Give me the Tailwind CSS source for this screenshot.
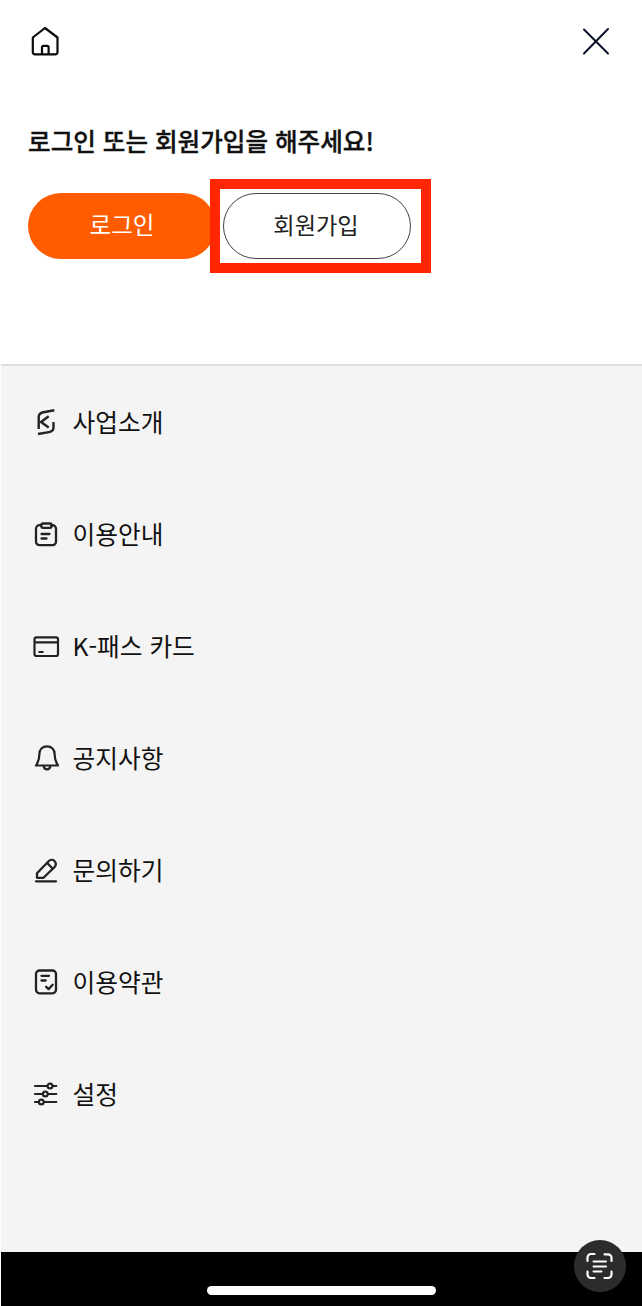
<!DOCTYPE html>
<html lang="ko">
<head>
  <meta charset="UTF-8">
  <meta name="viewport" content="width=device-width, initial-scale=1.0">
  <title>K-패스</title>
  <script src="https://cdn.jsdelivr.net/npm/@tailwindcss/browser@4"></script>
</head>
<body class="bg-white font-['Noto_Sans_CJK_KR','Noto_Sans',sans-serif] text-[#111]">
  <div class="relative flex flex-col h-[1306px] pl-px overflow-hidden">

    <!-- 상단 영역 -->
    <header class="h-[366px] shrink-0 border-b-2 border-[#dedede]">
      <div class="flex justify-between items-center h-[82px] pl-[29px] pr-[31px]">
        <button aria-label="홈">
          <svg class="w-[30px] h-[30px]" viewBox="0 0 30 30" fill="none" stroke="#0a0a0a" stroke-width="2.200" stroke-linecap="round" stroke-linejoin="round">
            <path d="M2.800 11.500 15 2 27.500 11.500v14.700a2.200 2.200 0 0 1-2.200 2.200H5a2.200 2.200 0 0 1-2.200-2.200z"/>
            <path d="M12 28v-6.700a1.500 1.500 0 0 1 1.500-1.500h3.600a1.500 1.500 0 0 1 1.500 1.500V28"/>
          </svg>
        </button>
        <button aria-label="닫기">
          <svg class="w-[30px] h-[30px]" viewBox="0 0 30 30" fill="none" stroke="#0b1228" stroke-width="2" stroke-linecap="round">
            <path d="M3 3.500 27 27.500M27 3 3 27.500"/>
          </svg>
        </button>
      </div>

      <h1 class="mt-10 mb-[21px] ml-[27px] h-9 leading-9 text-[24.600px] font-medium [-webkit-text-stroke:0.35px_#111] whitespace-nowrap">로그인 또는 회원가입을 해주세요!</h1>

      <div class="flex items-center ml-[27px]">
        <button class="w-[188px] h-[66px] pb-[3px] rounded-full bg-[#ff5c00] text-white text-[23.500px]">로그인</button>
        <!-- 회원가입 강조 -->
        <div class="relative -ml-[6px] w-[221px] h-[94px] border-10 border-[#ff2600] bg-white pl-[3px] flex items-center">
          <button class="w-[188px] h-[66px] pb-[3px] pr-[2px] rounded-full border border-[#444] text-[#222] text-[23.200px]">회원가입</button>
        </div>
      </div>
    </header>

    <!-- 메뉴 -->
    <nav class="grow bg-[#f4f4f4] pl-[31px] text-[24.700px]">
      <a class="flex items-center gap-[12.500px] h-28">
        <svg class="w-7 h-7" viewBox="0 0 28 28" fill="none" stroke="#222" stroke-width="2.400">
          <path d="M22.300 2.300 11.500 4.200Q6.700 5 6.700 9v12M16.700 8.300 9 14l7.700 5.500M21.500 14v5.500q0 3.800-4.500 4.600L6 26"/>
        </svg>
        <span>사업소개</span>
      </a>
      <a class="flex items-center gap-[12.500px] h-28">
        <svg class="w-7 h-7" viewBox="0 0 28 28" fill="none" stroke="#222" stroke-width="2.300" stroke-linecap="round">
          <path d="M9 5.200H7.500a3.500 3.500 0 0 0-3.500 3.500v13A3.500 3.500 0 0 0 7.500 25.200h13a3.500 3.500 0 0 0 3.500-3.500v-13A3.500 3.500 0 0 0 20.500 5.200H19"/>
          <rect x="9.300" y="3.500" width="10.400" height="4.300" rx="1.800"/>
          <path d="M9.500 14h8M9.500 18.500h5"/>
        </svg>
        <span>이용안내</span>
      </a>
      <a class="flex items-center gap-[12.500px] h-28">
        <svg class="w-7 h-7" viewBox="0 0 28 28" fill="none" stroke="#222" stroke-width="2.200">
          <rect x="2.500" y="5.300" width="23.500" height="18.700" rx="2"/>
          <path d="M2 10.300h24M6.500 20h5"/>
        </svg>
        <span>K-패스 카드</span>
      </a>
      <a class="flex items-center gap-[12.500px] h-28">
        <svg class="w-7 h-7" viewBox="0 0 28 28" fill="none" stroke="#222" stroke-width="2.200" stroke-linejoin="round">
          <path d="M15 2.300c-4.600 0-7.600 3.200-7.600 7.600 0 5.200-1.200 8.500-3.400 11.600h22c-2.200-3.100-3.400-6.400-3.400-11.600 0-4.400-3-7.600-7.600-7.600z"/>
          <path d="M11.500 22c.4 2 1.700 3.300 3.500 3.300s3.100-1.300 3.500-3.300"/>
        </svg>
        <span>공지사항</span>
      </a>
      <a class="flex items-center gap-[12.500px] h-28">
        <svg class="w-7 h-7" viewBox="0 0 28 28" fill="none" stroke="#222" stroke-width="2.300" stroke-linecap="round" stroke-linejoin="round">
          <path d="M5 21.800V17.200L16.600 5.200c1.700-1.800 4.200-1.800 5.900-.2s1.800 4.200.1 6L11.500 21.800z"/>
          <path d="m15.200 7 5.300 5.500M4 25.300h20"/>
        </svg>
        <span>문의하기</span>
      </a>
      <a class="flex items-center gap-[12.500px] h-28">
        <svg class="w-7 h-7" viewBox="0 0 28 28" fill="none" stroke="#222" stroke-width="2.300" stroke-linecap="round" stroke-linejoin="round">
          <rect x="4" y="2.500" width="20" height="22.800" rx="3.500"/>
          <path d="M9.500 7.800h7.500M9.500 12.500h4.200M14.200 18.800l2.400 2.300 4-4.300"/>
        </svg>
        <span>이용약관</span>
      </a>
      <a class="flex items-center gap-[12.500px] h-28">
        <svg class="w-7 h-7" viewBox="0 0 28 28" fill="none" stroke="#222" stroke-width="2.200" stroke-linecap="round">
          <path d="M3 6h12M21 6h3.300M3 14h7.300M16.300 14h8M3 22h3.300M12.300 22h12"/>
          <circle cx="18" cy="6" r="2.400"/>
          <circle cx="13.300" cy="14" r="2.400"/>
          <circle cx="9.300" cy="22" r="2.400"/>
        </svg>
        <span>설정</span>
      </a>
    </nav>

    <!-- 하단 홈 인디케이터 -->
    <footer class="h-[54px] shrink-0 bg-black flex justify-center items-end pb-[11px]">
      <div class="w-[229px] h-[9px] rounded-full bg-white"></div>
    </footer>

    <!-- 텍스트 스캔 버튼 -->
    <button aria-label="텍스트 스캔" class="absolute right-4 bottom-[14px] w-[52px] h-[52px] rounded-full bg-[#2d2b2b] flex items-center justify-center">
      <svg class="w-7 h-7" viewBox="0 0 28 28" fill="none" stroke="#fff" stroke-width="2.200" stroke-linecap="round">
        <path d="M1.500 9V5.500A3.500 3.500 0 0 1 5 2h3.500M18.500 2.300h3.500A3.500 3.500 0 0 1 25.500 5.800v3.200M25.500 19.500v3a3.500 3.500 0 0 1-3.500 3.500h-3.500M8.500 26h-3.500A3.500 3.500 0 0 1 1.500 22.500v-3"/>
        <path d="M7.500 9.500h12.500M7.500 14.500h12.500M7.500 19.500h8" stroke-width="2"/>
      </svg>
    </button>
  </div>
</body>
</html>
